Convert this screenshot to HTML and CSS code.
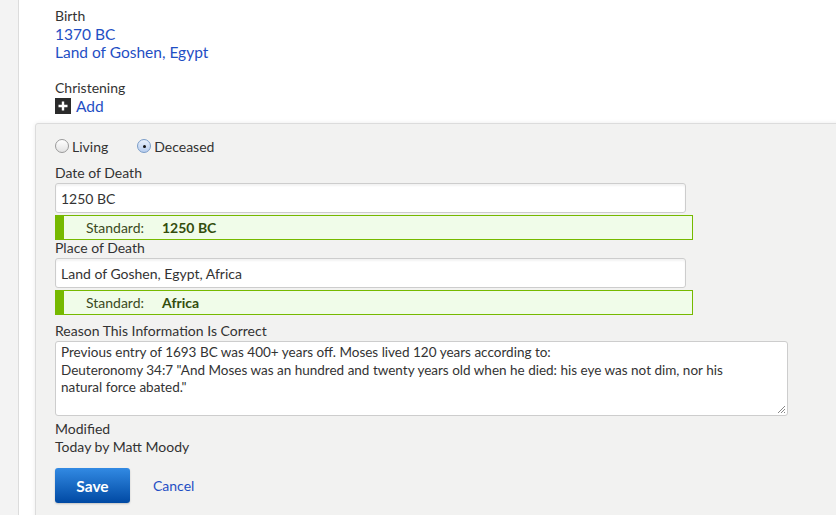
FILE: index.html
```html
<!DOCTYPE html>
<html>
<head>
<meta charset="utf-8">
<link rel="stylesheet" href="styles.css">
</head>
<body>
<div class="page">
  <div class="rail"></div>
  <div class="main">
    <div class="fact">
      <div class="label">Birth</div>
      <div class="link">1370 BC</div>
      <div class="link">Land of Goshen, Egypt</div>
    </div>
    <div class="fact fact2">
      <div class="label">Christening</div>
      <div class="add"><span class="plus"><svg width="16" height="16" viewBox="0 0 16 16"><rect width="16" height="16" fill="#2b2b2b"/><path d="M8 3.5v9M3.5 8h9" stroke="#fff" stroke-width="2.4"/></svg></span><span class="link">Add</span></div>
    </div>
    <div class="panel">
      <div class="radios">
        <label class="radio"><span class="rb"></span>Living</label>
        <label class="radio"><span class="rb on"></span>Deceased</label>
      </div>
      <div class="flabel">Date of Death</div>
      <div class="input">1250 BC</div>
      <div class="std"><span class="std-k">Standard:</span><span class="std-v">1250 BC</span></div>
      <div class="flabel">Place of Death</div>
      <div class="input">Land of Goshen, Egypt, Africa</div>
      <div class="std"><span class="std-k">Standard:</span><span class="std-v">Africa</span></div>
      <div class="flabel lbl-reason">Reason This Information Is Correct</div>
      <div class="textarea">Previous entry of 1693 BC was 400+ years off. Moses lived 120 years according to:<br>Deuteronomy 34:7 "And Moses was an hundred and twenty years old when he died: his eye was not dim, nor his natural force abated."<svg class="grip" width="9" height="9" viewBox="0 0 9 9"><path d="M8 1L1 8M8 4L4 8M8 7L7 8" stroke="#888" stroke-width="1"/></svg></div>
      <div class="label mod">Modified</div>
      <div class="label">Today by Matt Moody</div>
      <div class="actions">
        <button class="save">Save</button>
        <span class="link cancel">Cancel</span>
      </div>
    </div>
  </div>
</div>
</body>
</html>
```
FILE: styles.css
```css
html, body { margin: 0; padding: 0; background: #fff; }
body { font-family: Lato, "Open Sans", sans-serif; font-size: 14px; color: #333; }
.page { display: flex; height: 515px; overflow: hidden; }
.rail { width: 18px; flex: none; background: #f3f3f3; border-right: 1px solid #dcdcdc; }
.main { flex: 1; padding-left: 36px; padding-top: 7px; }
.label { line-height: 18px; color: #333; }
.flabel { line-height: 16px; color: #333; }
.link { color: #1f4fc4; font-size: 15.5px; line-height: 18px; }
.fact2 { margin-top: 18px; }
.add { display: flex; align-items: center; gap: 5px; height: 18px; }
.plus { display: flex; }
.panel {
  margin-left: -20px; margin-top: 8px; width: 768px;
  background: #f2f2f1; border: 1px solid #dcdcdc; border-radius: 3px;
  box-shadow: 0 0 4px rgba(0,0,0,0.08);
  padding: 12px 19px 20px;
  height: 400px;
}
.radios { display: flex; gap: 29px; height: 20px; align-items: center; margin-bottom: 9px; font-size: 14px; }
.radio { display: flex; align-items: center; gap: 3px; }
.rb { width: 14px; height: 14px; border-radius: 50%; border: 1px solid #9a9a9a; background: linear-gradient(#fff, #e2e2e2); position: relative; box-sizing: border-box; }
.rb.on { border-color: #7a9cc8; background: linear-gradient(#e8f0fb, #b7cdee); }
.rb.on::after { content: ""; position: absolute; left: 4.5px; top: 4.5px; width: 3px; height: 3px; border-radius: 50%; background: #111; }
.input {
  width: 631px; height: 30px; box-sizing: border-box; margin-top: 2px;
  background: #fff; border: 1px solid #cdcdcd; border-radius: 3px;
  box-shadow: inset 0 2px 2px rgba(0,0,0,0.05);
  padding: 6px 5px; line-height: 17px;
}
.std {
  width: 638px; height: 25px; box-sizing: border-box; margin-top: 2px;
  background: #f0fce9; border: 1px solid #76b900; border-left: 9px solid #76b900;
  display: flex; align-items: center; padding-left: 22px; color: #3b4a22;
}
.std-k { width: 76px; }
.std-v { font-weight: bold; color: #334d0d; }
.lbl-reason { margin-top: 8px; }
.textarea {
  position: relative; width: 733px; height: 75px; box-sizing: border-box; margin-top: 2px;
  background: #fff; border: 1px solid #cdcdcd; border-radius: 3px;
  padding: 2px 20px 2px 5px; line-height: 17.5px; font-size: 13.5px;
}
.grip { position: absolute; right: 1px; bottom: 1px; }
.mod { margin-top: 4px; }
.actions { display: flex; align-items: center; gap: 23px; margin-top: 12px; }
.save {
  width: 75px; height: 35px; border: none; border-radius: 3px;
  background: linear-gradient(#328ae3, #0049a3); color: #fff;
  font-family: inherit; font-size: 15.5px; font-weight: bold;
  box-shadow: 0 1px 2px rgba(0,0,0,0.2);
}
.cancel { font-size: 14px; }
```
